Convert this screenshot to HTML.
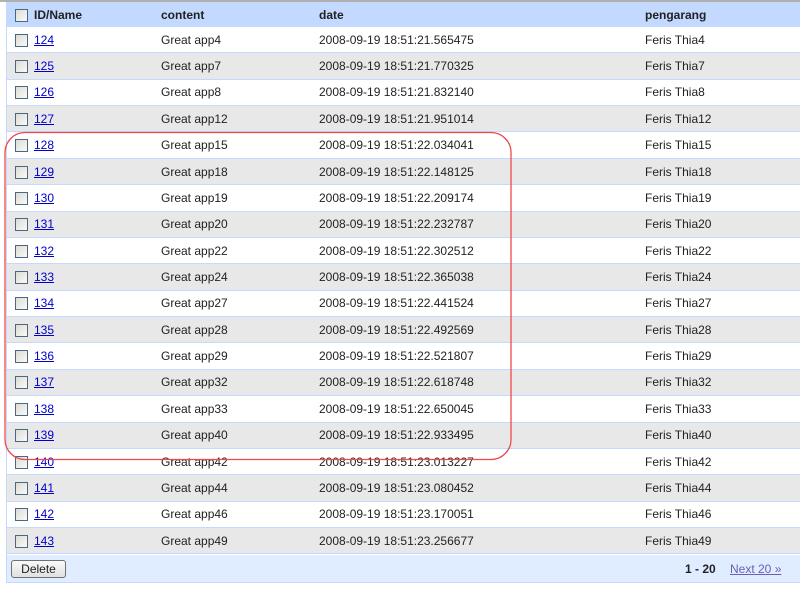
<!DOCTYPE html>
<html><head><style>
body{margin:0;width:800px;height:596px;background:#fff;position:relative;overflow:hidden;font-family:"Liberation Sans",Arial,sans-serif;font-size:12px;color:#222}
.top{position:absolute;left:0;top:0;width:800px;height:2px;background:#b0b0b0}
.frame{position:absolute;left:6px;top:2px;width:794px;height:581px;border-left:1px solid #c3d9ff;border-bottom:1px solid #c3d9ff;box-sizing:border-box}
.hdr{position:absolute;left:7px;top:2px;width:793px;height:25px;background:#c3d9ff}
.row{position:absolute;left:7px;width:793px;height:26.37px;border-bottom:1px solid #c3d9ff;box-sizing:border-box}
.g{background:#e8e8e8}
.c{position:absolute;top:50%;transform:translateY(-50%);white-space:nowrap}
.cb{position:absolute;left:8px;top:50%;margin-top:-6px;width:13px;height:13px;border:1px solid #4a6783;box-sizing:border-box;background:linear-gradient(135deg,#dcdcd4,#fafaf8)}
a{color:#00c;text-decoration:underline}
.hdr .c{font-weight:bold;color:#222}
.foot{position:absolute;left:7px;top:555px;width:793px;height:27px;background:#e0ecff}
.btn{position:absolute;left:4px;top:5px;width:55px;height:18px;border:1px solid #707070;border-radius:3px;background:linear-gradient(#fafafa,#e0e0e0);box-sizing:border-box;text-align:center;line-height:16px;font-size:12px}
svg.red{position:absolute;left:0;top:0}
</style></head><body>
<div class="top"></div>
<div class="frame"></div>
<div class="hdr"><div class="cb"></div><div class="c" style="left:27px">ID/Name</div><div class="c" style="left:154px">content</div><div class="c" style="left:312px">date</div><div class="c" style="left:638px">pengarang</div></div>

<div class="row" style="top:27px"><div class="cb"></div><div class="c" style="left:27px"><a>124</a></div><div class="c" style="left:154px">Great app4</div><div class="c" style="left:312px">2008-09-19 18:51:21.565475</div><div class="c" style="left:638px">Feris Thia4</div></div>
<div class="row g" style="top:53.37px"><div class="cb"></div><div class="c" style="left:27px"><a>125</a></div><div class="c" style="left:154px">Great app7</div><div class="c" style="left:312px">2008-09-19 18:51:21.770325</div><div class="c" style="left:638px">Feris Thia7</div></div>
<div class="row" style="top:79.74px"><div class="cb"></div><div class="c" style="left:27px"><a>126</a></div><div class="c" style="left:154px">Great app8</div><div class="c" style="left:312px">2008-09-19 18:51:21.832140</div><div class="c" style="left:638px">Feris Thia8</div></div>
<div class="row g" style="top:106.11px"><div class="cb"></div><div class="c" style="left:27px"><a>127</a></div><div class="c" style="left:154px">Great app12</div><div class="c" style="left:312px">2008-09-19 18:51:21.951014</div><div class="c" style="left:638px">Feris Thia12</div></div>
<div class="row" style="top:132.48px"><div class="cb"></div><div class="c" style="left:27px"><a>128</a></div><div class="c" style="left:154px">Great app15</div><div class="c" style="left:312px">2008-09-19 18:51:22.034041</div><div class="c" style="left:638px">Feris Thia15</div></div>
<div class="row g" style="top:158.85px"><div class="cb"></div><div class="c" style="left:27px"><a>129</a></div><div class="c" style="left:154px">Great app18</div><div class="c" style="left:312px">2008-09-19 18:51:22.148125</div><div class="c" style="left:638px">Feris Thia18</div></div>
<div class="row" style="top:185.22px"><div class="cb"></div><div class="c" style="left:27px"><a>130</a></div><div class="c" style="left:154px">Great app19</div><div class="c" style="left:312px">2008-09-19 18:51:22.209174</div><div class="c" style="left:638px">Feris Thia19</div></div>
<div class="row g" style="top:211.59px"><div class="cb"></div><div class="c" style="left:27px"><a>131</a></div><div class="c" style="left:154px">Great app20</div><div class="c" style="left:312px">2008-09-19 18:51:22.232787</div><div class="c" style="left:638px">Feris Thia20</div></div>
<div class="row" style="top:237.96px"><div class="cb"></div><div class="c" style="left:27px"><a>132</a></div><div class="c" style="left:154px">Great app22</div><div class="c" style="left:312px">2008-09-19 18:51:22.302512</div><div class="c" style="left:638px">Feris Thia22</div></div>
<div class="row g" style="top:264.33px"><div class="cb"></div><div class="c" style="left:27px"><a>133</a></div><div class="c" style="left:154px">Great app24</div><div class="c" style="left:312px">2008-09-19 18:51:22.365038</div><div class="c" style="left:638px">Feris Thia24</div></div>
<div class="row" style="top:290.7px"><div class="cb"></div><div class="c" style="left:27px"><a>134</a></div><div class="c" style="left:154px">Great app27</div><div class="c" style="left:312px">2008-09-19 18:51:22.441524</div><div class="c" style="left:638px">Feris Thia27</div></div>
<div class="row g" style="top:317.07px"><div class="cb"></div><div class="c" style="left:27px"><a>135</a></div><div class="c" style="left:154px">Great app28</div><div class="c" style="left:312px">2008-09-19 18:51:22.492569</div><div class="c" style="left:638px">Feris Thia28</div></div>
<div class="row" style="top:343.44px"><div class="cb"></div><div class="c" style="left:27px"><a>136</a></div><div class="c" style="left:154px">Great app29</div><div class="c" style="left:312px">2008-09-19 18:51:22.521807</div><div class="c" style="left:638px">Feris Thia29</div></div>
<div class="row g" style="top:369.81px"><div class="cb"></div><div class="c" style="left:27px"><a>137</a></div><div class="c" style="left:154px">Great app32</div><div class="c" style="left:312px">2008-09-19 18:51:22.618748</div><div class="c" style="left:638px">Feris Thia32</div></div>
<div class="row" style="top:396.18px"><div class="cb"></div><div class="c" style="left:27px"><a>138</a></div><div class="c" style="left:154px">Great app33</div><div class="c" style="left:312px">2008-09-19 18:51:22.650045</div><div class="c" style="left:638px">Feris Thia33</div></div>
<div class="row g" style="top:422.55px"><div class="cb"></div><div class="c" style="left:27px"><a>139</a></div><div class="c" style="left:154px">Great app40</div><div class="c" style="left:312px">2008-09-19 18:51:22.933495</div><div class="c" style="left:638px">Feris Thia40</div></div>
<div class="row" style="top:448.92px"><div class="cb"></div><div class="c" style="left:27px"><a>140</a></div><div class="c" style="left:154px">Great app42</div><div class="c" style="left:312px">2008-09-19 18:51:23.013227</div><div class="c" style="left:638px">Feris Thia42</div></div>
<div class="row g" style="top:475.29px"><div class="cb"></div><div class="c" style="left:27px"><a>141</a></div><div class="c" style="left:154px">Great app44</div><div class="c" style="left:312px">2008-09-19 18:51:23.080452</div><div class="c" style="left:638px">Feris Thia44</div></div>
<div class="row" style="top:501.66px"><div class="cb"></div><div class="c" style="left:27px"><a>142</a></div><div class="c" style="left:154px">Great app46</div><div class="c" style="left:312px">2008-09-19 18:51:23.170051</div><div class="c" style="left:638px">Feris Thia46</div></div>
<div class="row g" style="top:528.03px"><div class="cb"></div><div class="c" style="left:27px"><a>143</a></div><div class="c" style="left:154px">Great app49</div><div class="c" style="left:312px">2008-09-19 18:51:23.256677</div><div class="c" style="left:638px">Feris Thia49</div></div>

<div class="foot"><div class="btn">Delete</div><div class="c" style="left:678px;font-weight:bold">1 - 20</div><div class="c" style="left:723px"><a style="color:#6b5fb5">Next 20 »</a></div></div>
<svg class="red" width="800" height="596"><rect x="5" y="132.5" width="506" height="327" rx="20" ry="20" fill="none" stroke="#f04848" stroke-width="1.3"/></svg>
</body></html>
